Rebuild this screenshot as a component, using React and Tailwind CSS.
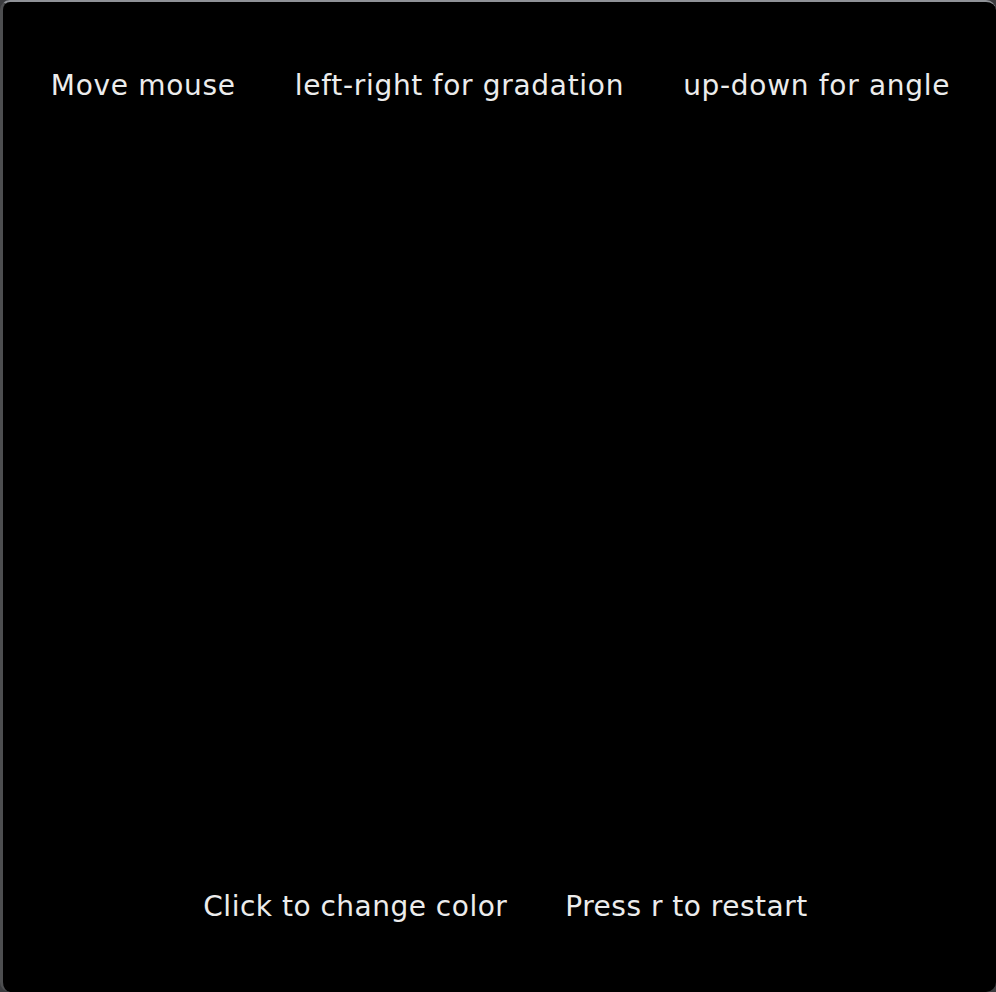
export default function App() {
  const font = { fontFamily: '"DejaVu Sans", "Liberation Sans", sans-serif' };

  return (
    <div className="w-[996px] h-[992px] bg-[#3a3b3e]">
      <div
        className="w-full h-full bg-black rounded-[10px] border-t-2 border-l-[3px] border-t-[#8f9297] border-l-[#4d4e50] flex flex-col justify-between pt-[67px] pb-[68px] text-[28px] leading-[34px] tracking-[0.7px] text-[#ececec]"
        style={font}
      >
        <div className="flex justify-center gap-[59px] pl-[2px] whitespace-nowrap">
          <span>Move mouse</span>
          <span>left-right for gradation</span>
          <span>up-down for angle</span>
        </div>
        <div className="flex justify-center gap-[58px] pl-[12px] whitespace-nowrap tracking-[0.5px]">
          <span>Click to change color</span>
          <span>Press r to restart</span>
        </div>
      </div>
    </div>
  );
}
